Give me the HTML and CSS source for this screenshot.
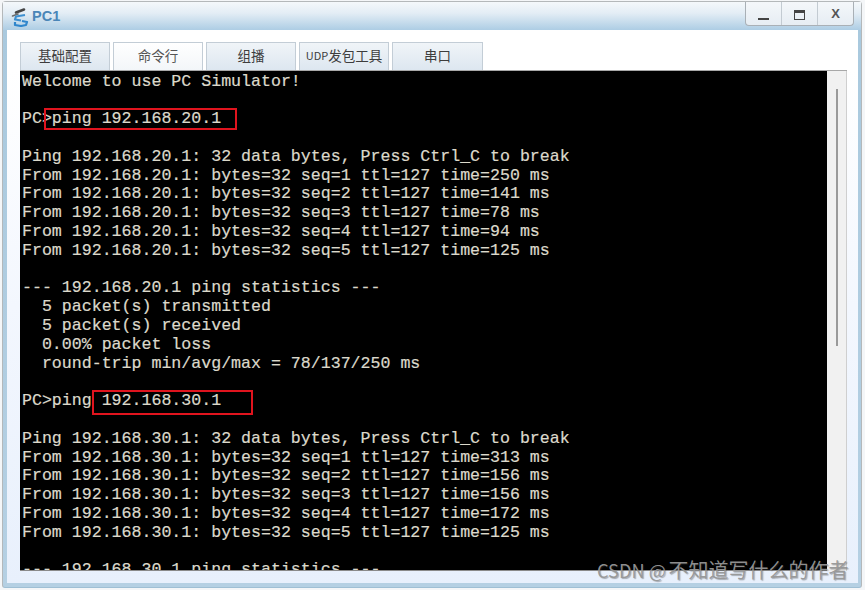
FILE: index.html
```html
<!DOCTYPE html>
<html lang="zh">
<head>
<meta charset="utf-8">
<title>PC1</title>
<link rel="stylesheet" href="styles.css">
</head>
<body>
<div class="window">
  <header class="titlebar">
    <div class="title">
      <svg class="app-icon" width="18" height="21" viewBox="0 0 18 21">
        <path d="M5 6.5 L13 3.5" stroke="#454545" stroke-width="2.6" fill="none" stroke-linecap="round"/>
        <path d="M1.5 10 L7 8" stroke="#6c6c6c" stroke-width="1.6" fill="none" stroke-linecap="round"/>
        <path d="M14 9 L5 10.5 L4 13.5 L10 14.5" stroke="#3d8fd0" stroke-width="2.2" fill="none" stroke-linejoin="round"/>
        <path d="M4 16 L4 19 L10 20 L15 19 L16 16 L11 15" stroke="#2f86cc" stroke-width="2.2" fill="none" stroke-linejoin="round"/>
      </svg>
      <span class="title-text">PC1</span>
    </div>
    <div class="controls">
      <div class="ctrl"><span class="min-glyph"></span></div>
      <div class="ctrl"><span class="max-glyph"></span></div>
      <div class="ctrl ctrl-x">X</div>
    </div>
  </header>
  <main class="content">
    <nav class="tabs">
      <div class="tab">基础配置</div>
      <div class="tab tab-active">命令行</div>
      <div class="tab">组播</div>
      <div class="tab"><span class="udp">UDP</span>发包工具</div>
      <div class="tab tab-wide">串口</div>
    </nav>
    <div class="panel">
      <pre class="terminal">Welcome to use PC Simulator!

PC&gt;ping 192.168.20.1

Ping 192.168.20.1: 32 data bytes, Press Ctrl_C to break
From 192.168.20.1: bytes=32 seq=1 ttl=127 time=250 ms
From 192.168.20.1: bytes=32 seq=2 ttl=127 time=141 ms
From 192.168.20.1: bytes=32 seq=3 ttl=127 time=78 ms
From 192.168.20.1: bytes=32 seq=4 ttl=127 time=94 ms
From 192.168.20.1: bytes=32 seq=5 ttl=127 time=125 ms

--- 192.168.20.1 ping statistics ---
  5 packet(s) transmitted
  5 packet(s) received
  0.00% packet loss
  round-trip min/avg/max = 78/137/250 ms

PC&gt;ping 192.168.30.1

Ping 192.168.30.1: 32 data bytes, Press Ctrl_C to break
From 192.168.30.1: bytes=32 seq=1 ttl=127 time=313 ms
From 192.168.30.1: bytes=32 seq=2 ttl=127 time=156 ms
From 192.168.30.1: bytes=32 seq=3 ttl=127 time=156 ms
From 192.168.30.1: bytes=32 seq=4 ttl=127 time=172 ms
From 192.168.30.1: bytes=32 seq=5 ttl=127 time=125 ms

--- 192.168.30.1 ping statistics ---</pre>
      <div class="scrollbar"><div class="thumb"></div></div>
      <div class="mark mark-one"></div>
      <div class="mark mark-two"></div>
    </div>
  </main>
</div>
<div class="watermark"><span class="wm-latin">CSDN @</span>不知道写什么的作者</div>
</body>
</html>
```

FILE: styles.css
```css
* { box-sizing: border-box; }
html, body { margin: 0; height: 100%; }
body {
  position: relative;
  width: 865px;
  height: 590px;
  overflow: hidden;
  background: #f4f6f8;
  font-family: "Noto Sans CJK SC", "Liberation Sans", sans-serif;
}
.window {
  margin: 1px 3px 2px 2px;
  height: 587px;
  display: flex;
  flex-direction: column;
  padding: 0 3px 4px 4px;
  background: linear-gradient(#dfeaf3, #a9c9de 28px, #b5d0e3);
  border: 1px solid #b4b8ba;
  border-bottom-color: #9fbfd4;
  border-radius: 4px 4px 3px 3px;
}
.titlebar {
  height: 28px;
  flex: none;
  display: flex;
  justify-content: space-between;
  align-items: flex-start;
  margin: 0 -3px 0 -4px;
  padding-left: 8px;
  background: linear-gradient(#f4f8fb, #e3edf5 40%, #adcde4);
}
.title {
  height: 28px;
  display: flex;
  align-items: center;
  gap: 3px;
}
.title-text {
  font-family: "Liberation Sans", sans-serif;
  font-size: 14.5px;
  font-weight: bold;
  line-height: 30px;
  color: #4a86b8;
}
.controls {
  display: flex;
  margin-right: 7px;
  width: 109px;
  height: 24px;
  border: 1px solid #a9b0b6;
  border-top: none;
  border-radius: 0 0 4px 4px;
  background: linear-gradient(#f4f7fa, #e6edf3);
}
.ctrl {
  flex: 1;
  display: flex;
  align-items: center;
  justify-content: center;
  border-left: 1px solid #c3cbd2;
}
.ctrl:first-child { border-left: none; }
.min-glyph {
  width: 11px;
  height: 2px;
  margin-top: 11px;
  background: #444;
}
.max-glyph {
  width: 11px;
  height: 10px;
  margin-top: 2px;
  border: 1px solid #444;
  border-top-width: 3px;
}
.ctrl-x {
  font-family: "Liberation Sans", sans-serif;
  font-size: 13px;
  font-weight: bold;
  color: #555;
}
.content {
  flex: 1;
  min-height: 0;
  display: flex;
  flex-direction: column;
  padding: 12px 0 12px 13px;
  background: linear-gradient(#ffffff, #ffffff 40px, #f3f7fe 50%, #e8f0fc);
}
.tabs {
  display: flex;
  gap: 3px;
  height: 28px;
  flex: none;
}
.tab {
  width: 90px;
  display: flex;
  align-items: center;
  justify-content: center;
  padding-bottom: 3px;
  font-size: 13.5px;
  color: #3d3d3d;
  background: linear-gradient(#f0f4f8, #dde7f0);
  border: 1px solid #c3cdd6;
  border-bottom: none;
}
.tab-active {
  background: linear-gradient(#ffffff, #f3f6f9);
  color: #555;
}
.tab-wide { width: 91px; }
.udp { font-size: 11px; }
.panel {
  position: relative;
  flex: 1;
  min-height: 0;
  width: 827px;
  display: flex;
  border-top: 1px solid #a8a8a8;
}
.terminal {
  flex: 1;
  min-width: 0;
  margin: 0;
  padding: 1.6px 0 0 2px;
  overflow: hidden;
  background: #000;
  border-bottom: 1px solid #8a8a8a;
  color: #dcd9cb;
  font-family: "Liberation Mono", monospace;
  font-size: 16.6px;
  line-height: 18.8px;
  -webkit-text-stroke: 0.2px #dcd9cb;
}
.scrollbar {
  width: 20px;
  flex: none;
  padding: 18px 0 0 9px;
  background: #f1f1f1;
  border-right: 1px solid #cfcfcf;
}
.thumb {
  width: 2px;
  height: 257px;
  background: #9a9a9a;
}
.mark {
  position: absolute;
  border: 2px solid #e0141e;
}
.mark-one { left: 24px; top: 37px; width: 193px; height: 22px; }
.mark-two { left: 72px; top: 319px; width: 161px; height: 25px; }
.watermark {
  position: absolute;
  left: 597px;
  top: 557px;
  font-size: 20px;
  line-height: 26px;
  white-space: nowrap;
  color: rgba(150, 150, 150, 0.95);
  text-shadow: 1px 1px 1px rgba(60, 60, 60, 0.4);
}
.wm-latin { font-size: 18.2px; padding-right: 2.5px; }
```
